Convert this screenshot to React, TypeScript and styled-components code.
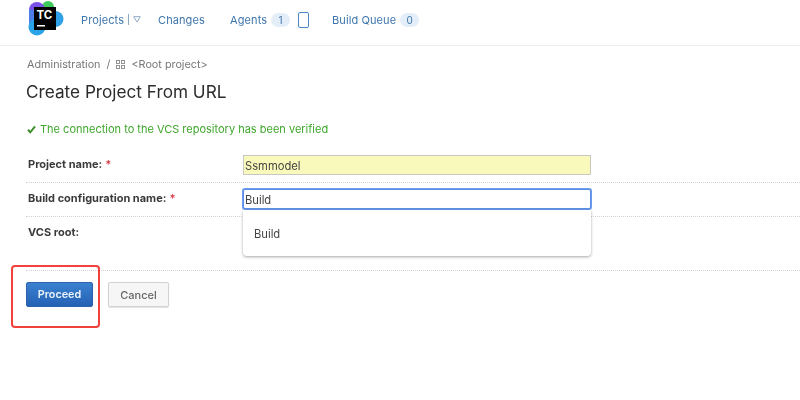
import React from "react";
import styled, { createGlobalStyle } from "styled-components";

const GlobalStyle = createGlobalStyle`
  html, body {
    margin: 0;
    padding: 0;
    background: #fff;
    font-family: Inter, "Liberation Sans", sans-serif;
    color: #333;
  }
`;

const Page = styled.div`
  position: relative;
  width: 800px;
  height: 400px;
  overflow: hidden;
  filter: blur(0.35px);
`;

const Header = styled.header`
  display: flex;
  align-items: center;
  height: 46px;
  padding: 0 0 6px 28px;
  box-sizing: border-box;
  border-bottom: 1px solid #eeeeee;
`;

const Logo = styled.svg`
  width: 36px;
  height: 36px;
  margin: 0 17px 4px 0;
  flex: none;
`;

const Nav = styled.nav`
  display: flex;
  align-items: center;
`;

const NavLink = styled.a<{ $w: number }>`
  display: flex;
  align-items: center;
  width: ${({ $w }) => $w}px;
  font-size: 11px;
  letter-spacing: 0.1px;
  color: #3f76ad;
`;

const Badge = styled.span`
  display: inline-block;
  min-width: 19px;
  height: 14px;
  line-height: 14px;
  margin-left: 4px;
  border-radius: 7px;
  background: #e4eef8;
  color: #3f76ad;
  font-size: 10px;
  text-align: center;
`;

const Divider = styled.span`
  width: 1px;
  height: 11px;
  margin: 0 4px 0 4px;
  background: #8da9c4;
`;

const Square = styled.span`
  width: 9px;
  height: 14px;
  margin: 0 23px 0 9px;
  border: 1px solid #4a86c8;
  border-radius: 2px;
  flex: none;
`;

const Content = styled.main`
  padding: 11px 0 0 27px;
`;

const Breadcrumb = styled.div`
  display: flex;
  align-items: center;
  height: 14px;
  font-size: 10.8px;
  color: #777;
`;

const GridIcon = styled.svg`
  width: 9px;
  height: 9px;
  margin: 0 6px 0 6px;
`;

const Title = styled.h1`
  margin: 9px 0 0 -1px;
  height: 24px;
  line-height: 24px;
  font-size: 17.2px;
  font-weight: 400;
  color: #2c2c2c;
`;

const Verified = styled.div`
  display: flex;
  align-items: center;
  gap: 4px;
  margin-top: 18px;
  height: 14px;
  font-size: 11px;
  color: #3fa72c;
`;

const Form = styled.div`
  margin: 13px 0 0 -1px;
`;

const Row = styled.div<{ $h: number }>`
  display: grid;
  grid-template-columns: 217px 348px;
  align-items: start;
  height: ${({ $h }) => $h}px;
  padding-top: 6px;
  box-sizing: border-box;
  border-bottom: 1px dotted #d4d4d4;
`;

const Label = styled.label`
  padding-top: 1.5px;
  padding-left: 2px;
  font-size: 11px;
  font-weight: 700;
  line-height: 14px;
  color: #3a3a3a;
`;

const Required = styled.span`
  color: #d9434e;
  margin-left: 3px;
`;

const Field = styled.div<{ $focus?: boolean; $fill?: boolean }>`
  height: 20px;
  box-sizing: border-box;
  padding-left: 1px;
  line-height: 20px;
  font-size: 11.2px;
  color: #444;
  background: ${({ $fill }) => ($fill ? "#f9f9bc" : "#fff")};
  border: 1px solid ${({ $focus }) => ($focus ? "#5b8fe6" : "#c8c8c0")};
  box-shadow: ${({ $focus }) => ($focus ? "0 0 0 1px #6d9cec" : "none")};
  ${({ $focus }) => ($focus ? "border-radius: 2px;" : "")}
`;

const FieldCell = styled.div`
  position: relative;
`;

const Suggestions = styled.div`
  position: absolute;
  top: 21px;
  left: 0;
  right: 0;
  height: 46px;
  box-sizing: border-box;
  padding: 17px 0 0 11px;
  font-size: 11.2px;
  line-height: 14px;
  color: #444;
  background: #fff;
  border-radius: 0 0 4px 4px;
  box-shadow: 0 1px 3px rgba(0, 0, 0, 0.35);
  z-index: 2;
`;

const Actions = styled.div`
  display: flex;
  gap: 15px;
  margin: 11px 0 0 -1px;
`;

const Primary = styled.button`
  width: 67px;
  height: 25px;
  padding: 0;
  border: 1px solid #2a62ad;
  border-radius: 2px;
  background: linear-gradient(#3b81d0, #2461b4);
  color: #eef4fb;
  font: 600 10.8px Inter, sans-serif;
`;

const Secondary = styled.button`
  width: 61px;
  height: 25px;
  padding: 0;
  border: 1px solid #d2d2d2;
  border-radius: 2px;
  background: #f6f6f6;
  color: #666;
  box-shadow: 0 1px 1px rgba(0, 0, 0, 0.12);
  font: 500 11px Inter, sans-serif;
`;

const Annotation = styled.div`
  position: absolute;
  left: 11px;
  top: 265px;
  width: 89px;
  height: 63px;
  box-sizing: border-box;
  border: 2px solid #f0413a;
  border-radius: 4px;
`;

export default function App() {
  return (
    <Page>
      <GlobalStyle />
      <Header>
        <Logo viewBox="0 0 36 36">
          <circle cx="20" cy="7" r="6" fill="#3ec95c" />
          <circle cx="9" cy="10" r="8" fill="#7b52e8" />
          <rect x="1" y="10" width="10" height="16" fill="#4d7fe8" />
          <ellipse cx="27" cy="19" rx="8.5" ry="8" fill="#2f9fe6" />
          <circle cx="9" cy="27" r="8.5" fill="#2aa3e8" />
          <rect x="6" y="7" width="22" height="23" fill="#000" />
          <text x="8.5" y="19" fill="#fff" fontSize="11.5" fontWeight="700" fontFamily="Inter, sans-serif">TC</text>
          <rect x="9" y="25" width="8" height="1.5" fill="#fff" />
        </Logo>
        <Nav>
          <NavLink $w={77}>
            Projects
            <Divider />
            <svg width="8" height="7" viewBox="0 0 8 7">
              <path d="M.7.7h6.6L4 6z" fill="none" stroke="#8da9c4" />
            </svg>
          </NavLink>
          <NavLink $w={72}>Changes</NavLink>
          <NavLink $w={59}>
            Agents<Badge>1</Badge>
          </NavLink>
          <Square />
          <NavLink $w={90}>
            Build Queue<Badge>0</Badge>
          </NavLink>
        </Nav>
      </Header>
      <Content>
        <Breadcrumb>
          Administration&nbsp;&nbsp;/
          <GridIcon viewBox="0 0 9 9">
            <g fill="none" stroke="#888" strokeWidth="0.9">
              <rect x="0.5" y="0.5" width="3" height="3" />
              <rect x="5.5" y="0.5" width="3" height="3" />
              <rect x="0.5" y="5.5" width="3" height="3" />
              <rect x="5.5" y="5.5" width="3" height="3" />
            </g>
          </GridIcon>
          &lt;Root project&gt;
        </Breadcrumb>
        <Title>Create Project From URL</Title>
        <Verified>
          <svg width="9" height="9" viewBox="0 0 9 9">
            <path d="M1 4.8l2.3 2.5L8 1.4" fill="none" stroke="#3d8f2c" strokeWidth="2" />
          </svg>
          The connection to the VCS repository has been verified
        </Verified>
        <Form>
          <Row $h={34}>
            <Label>
              Project name:<Required>*</Required>
            </Label>
            <Field $fill>Ssmmodel</Field>
          </Row>
          <Row $h={34}>
            <Label>
              Build configuration name:<Required>*</Required>
            </Label>
            <FieldCell>
              <Field $focus>Build</Field>
              <Suggestions>Build</Suggestions>
            </FieldCell>
          </Row>
          <Row $h={54}>
            <Label>VCS root:</Label>
          </Row>
        </Form>
        <Actions>
          <Primary>Proceed</Primary>
          <Secondary>Cancel</Secondary>
        </Actions>
      </Content>
      <Annotation />
    </Page>
  );
}
